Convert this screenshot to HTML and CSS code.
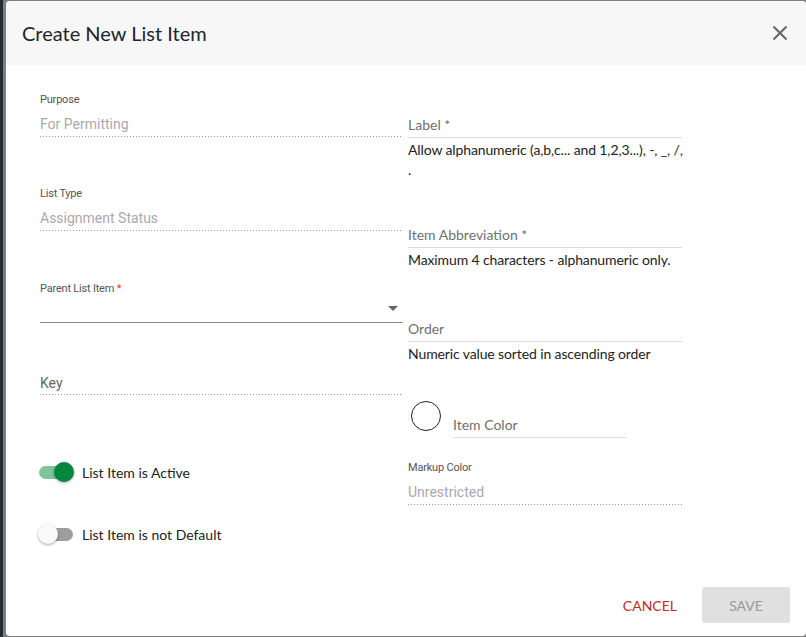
FILE: index.html
```html
<!DOCTYPE html>
<html lang="en">
  <head>
    <meta charset="UTF-8" />
    <meta name="viewport" content="width=device-width, initial-scale=1.0" />
    <title>Create New List Item</title>
    <link rel="stylesheet" href="styles.css">
  </head>

  <body>
    <div class="dialog">
      <div class="dialog-header">
        <h2>Create New List Item</h2>
        <button class="close-button" aria-label="Close">
          <svg width="16" height="16" viewBox="0 0 16 16">
            <path d="M1.5 1.5 L14.5 14.5 M14.5 1.5 L1.5 14.5" stroke="#666" stroke-width="2" fill="none" />
          </svg>
        </button>
      </div>

      <div class="dialog-body">
        <div class="col col-left">
          <div class="readonly-field">
            <div class="small-label">Purpose</div>
            <div class="readonly-value">For Permitting</div>
          </div>
          <div class="readonly-field gap-49">
            <div class="small-label">List Type</div>
            <div class="readonly-value">Assignment Status</div>
          </div>
          <div class="select-field gap-50">
            <div class="small-label">Parent List Item <span class="req">*</span></div>
            <div class="select-box"><span class="caret"></span></div>
          </div>
          <div class="key-field gap-50">Key</div>

          <div class="toggle-row gap-66">
            <span class="toggle on"><span class="knob"></span></span>
            <span class="toggle-text">List Item is Active</span>
          </div>
          <div class="toggle-row gap-42">
            <span class="toggle"><span class="knob"></span></span>
            <span class="toggle-text">List Item is not Default</span>
          </div>
        </div>

        <div class="col col-right">
          <div class="text-field">
            <div class="field-label">Label *</div>
            <div class="helper">Allow alphanumeric (a,b,c... and 1,2,3...), -, _, /,<br>.</div>
          </div>
          <div class="text-field gap-45">
            <div class="field-label">Item Abbreviation *</div>
            <div class="helper">Maximum 4 characters - alphanumeric only.</div>
          </div>
          <div class="text-field gap-49">
            <div class="field-label">Order</div>
            <div class="helper">Numeric value sorted in ascending order</div>
          </div>
          <div class="color-row">
            <span class="swatch"></span>
            <span class="color-label">Item Color</span>
          </div>
          <div class="readonly-field gap-23">
            <div class="small-label">Markup Color</div>
            <div class="readonly-value">Unrestricted</div>
          </div>
        </div>
      </div>

      <div class="dialog-footer">
        <button class="cancel-button">CANCEL</button>
        <button class="save-button" disabled>SAVE</button>
      </div>
    </div>
  </body>
</html>
```

FILE: styles.css
```css
html,
body {
  margin: 0;
  height: 100%;
}
body {
  background: linear-gradient(to right, #262c33 3px, #7f7f7f 3px);
  font-family: Lato, "Open Sans", sans-serif;
  overflow: hidden;
}

.dialog {
  margin: 1px 0 0 6px;
  height: 635px;
  background-color: white;
  border-radius: 4px;
  overflow: hidden;
  display: flex;
  flex-direction: column;
}

.dialog-header {
  height: 64px;
  background-color: #f7f7f7;
  display: flex;
  align-items: center;
  justify-content: space-between;
  padding: 0 18px 0 16px;
}
.dialog-header h2 {
  margin: 0;
  font-size: 20px;
  font-weight: 400;
  color: #212529;
}
.close-button {
  border: none;
  background: none;
  padding: 0;
  width: 16px;
  height: 16px;
  cursor: pointer;
}

.dialog-body {
  flex: 1;
  display: grid;
  grid-template-columns: 363px 274px;
  column-gap: 5px;
  padding-left: 34px;
}
.col {
  display: flex;
  flex-direction: column;
}
.col-left {
  padding-top: 28px;
}
.col-right {
  padding-top: 50px;
}

.gap-23 { margin-top: 23px; }
.gap-42 { margin-top: 42px; }
.gap-45 { margin-top: 45px; }
.gap-49 { margin-top: 49px; }
.gap-50 { margin-top: 50px; }
.gap-66 { margin-top: 66px; }

/* read-only / disabled inputs */
.small-label {
  font-family: Roboto, Arial, sans-serif;
  font-size: 11px;
  line-height: 14px;
  color: #555;
  letter-spacing: -0.2px;
}
.req {
  color: #e53935;
}
.readonly-value {
  margin-top: 7px;
  font-family: Roboto, Arial, sans-serif;
  font-size: 14px;
  line-height: 20px;
  color: #aaa;
  padding-bottom: 3px;
  border-bottom: 1px solid transparent;
  background-image: linear-gradient(to right, #999 0 1px, transparent 1px);
  background-size: 3px 1px;
  background-repeat: repeat-x;
  background-position: left bottom;
}

.select-box {
  position: relative;
  height: 26px;
  border-bottom: 1px solid #8a8a8a;
}
.caret {
  position: absolute;
  right: 5px;
  top: 10px;
  width: 0;
  height: 0;
  border-left: 5px solid transparent;
  border-right: 5px solid transparent;
  border-top: 5px solid #666;
}

.key-field {
  font-family: Roboto, Arial, sans-serif;
  font-size: 14px;
  line-height: 20px;
  color: #666;
  padding-bottom: 2px;
  border-bottom: 1px solid transparent;
  background-image: linear-gradient(to right, #999 0 1px, transparent 1px);
  background-size: 3px 1px;
  background-repeat: repeat-x;
  background-position: left bottom;
}

/* toggles */
.toggle-row {
  display: flex;
  align-items: center;
  height: 20px;
}
.toggle {
  position: relative;
  width: 34px;
  height: 13px;
  margin-left: -1px;
  border-radius: 7px;
  background-color: #9e9e9e;
}
.toggle.on {
  background-color: #7fc49b;
}
.knob {
  position: absolute;
  top: -3.5px;
  left: -1px;
  width: 20px;
  height: 20px;
  border-radius: 50%;
  background-color: #fafafa;
  box-shadow: 0 1px 3px rgba(0, 0, 0, 0.35);
}
.toggle.on .knob {
  left: 15px;
  background-color: #00873d;
}
.toggle-text {
  margin-left: 9px;
  font-size: 14px;
  color: #222;
}

/* right column text fields */
.field-label {
  font-size: 14px;
  line-height: 20px;
  color: #707070;
  padding-bottom: 2px;
  border-bottom: 1px solid #dcdcdc;
}
.helper {
  margin-top: 2px;
  width: 290px;
  font-size: 14px;
  line-height: 20px;
  letter-spacing: -0.12px;
  color: #222;
}

.color-row {
  margin-top: 37px;
  display: flex;
  align-items: flex-start;
}
.swatch {
  width: 28px;
  height: 28px;
  margin-left: 3px;
  border: 1px solid #222;
  border-radius: 50%;
  flex-shrink: 0;
}
.color-label {
  margin: 14px 0 0 12px;
  width: 173px;
  font-size: 14px;
  line-height: 20px;
  color: #707070;
  padding-bottom: 2px;
  border-bottom: 1px solid #dcdcdc;
}

/* footer */
.dialog-footer {
  display: flex;
  justify-content: flex-end;
  align-items: center;
  gap: 17px;
  padding: 0 16px 13px 0;
}
button {
  font-family: Lato, "Open Sans", sans-serif;
  font-size: 14px;
}
.cancel-button {
  border: none;
  background: none;
  color: #c62828;
  padding: 0 8px;
  cursor: pointer;
}
.save-button {
  width: 88px;
  height: 36px;
  border: none;
  border-radius: 2px;
  background-color: #e0e0e0;
  color: #9a9a9a;
}
```
